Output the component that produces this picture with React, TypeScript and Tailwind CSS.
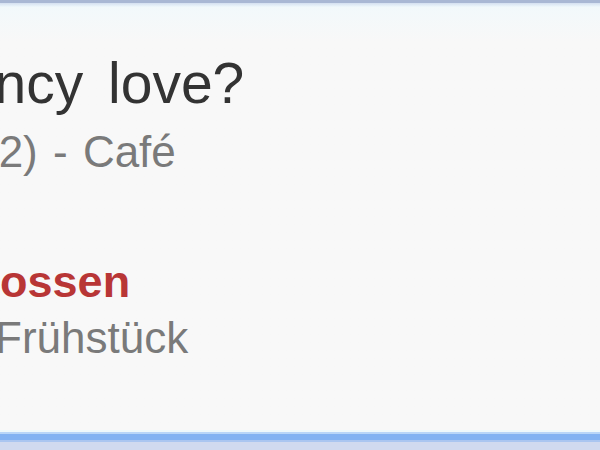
export default function App() {
  return (
    <div
      className="w-[600px] h-[450px] flex flex-col overflow-hidden bg-[#f8f8f8]"
      style={{ fontFamily: '"Liberation Sans", Arial, sans-serif' }}
    >
      <div className="h-[3px] bg-[#a9b8d4]" />
      <div className="h-[4px] bg-gradient-to-b from-[#d4e0f0] to-[#f0f9fc]" />
      <div className="flex-1 flex flex-col overflow-hidden pt-[48px] bg-gradient-to-b from-[#f2f9fb] via-[#f8f8f8] via-[8%] to-[#f8f8f8]">
        <div className="whitespace-nowrap text-[57px] leading-none text-[#333333] ml-[-72px] [word-spacing:9px]">
          Fancy love?
        </div>
        <div className="whitespace-nowrap text-[44px] leading-none text-[#7a7a7a] ml-[-16px] mt-[18px] [word-spacing:3px]">
          (2) - Café
        </div>
        <div className="whitespace-nowrap text-[45px] leading-none font-bold text-[#b83636] ml-[-150px] mt-[85px]">
          Geschlossen
        </div>
        <div className="whitespace-nowrap text-[44px] leading-none text-[#7a7a7a] ml-[-5px] mt-[12px]">
          Frühstück
        </div>
      </div>
      <div className="h-[2px] bg-[#eef8fb]" />
      <div className="h-[2px] bg-[#b8d6f8]" />
      <div className="h-[6px] bg-[#82b2f2]" />
      <div className="h-[2px] bg-[#aac6f0]" />
      <div className="h-[8px] bg-[#d0daef]" />
    </div>
  );
}
